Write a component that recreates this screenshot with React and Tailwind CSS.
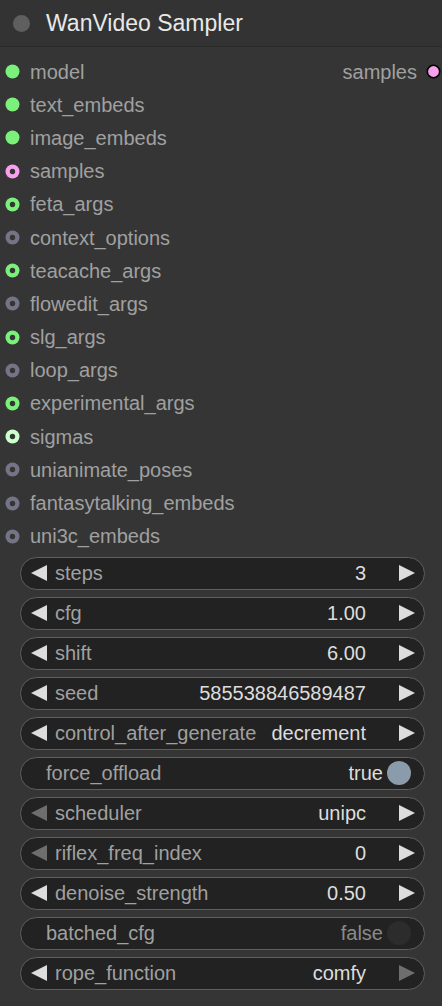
const inputs = [
  { name: "model", color: "#7bf07b", ring: false },
  { name: "text_embeds", color: "#7bf07b", ring: false },
  { name: "image_embeds", color: "#7bf07b", ring: false },
  { name: "samples", color: "#f6a0ee", ring: true },
  { name: "feta_args", color: "#7bf07b", ring: true },
  { name: "context_options", color: "#747486", ring: true },
  { name: "teacache_args", color: "#7bf07b", ring: true },
  { name: "flowedit_args", color: "#747486", ring: true },
  { name: "slg_args", color: "#7bf07b", ring: true },
  { name: "loop_args", color: "#747486", ring: true },
  { name: "experimental_args", color: "#7bf07b", ring: true },
  { name: "sigmas", color: "#ccffcc", ring: true },
  { name: "unianimate_poses", color: "#747486", ring: true },
  { name: "fantasytalking_embeds", color: "#747486", ring: true },
  { name: "uni3c_embeds", color: "#747486", ring: true },
];

const widgets = [
  { type: "num", label: "steps", value: "3" },
  { type: "num", label: "cfg", value: "1.00" },
  { type: "num", label: "shift", value: "6.00" },
  { type: "num", label: "seed", value: "585538846589487" },
  { type: "num", label: "control_after_generate", value: "decrement" },
  { type: "toggle", label: "force_offload", value: true },
  { type: "num", label: "scheduler", value: "unipc", leftOff: true },
  { type: "num", label: "riflex_freq_index", value: "0", leftOff: true },
  { type: "num", label: "denoise_strength", value: "0.50" },
  { type: "toggle", label: "batched_cfg", value: false },
  { type: "num", label: "rope_function", value: "comfy", rightOff: true },
];

const Dot = ({ color, ring, outline }) => (
  <svg width="15" height="15" viewBox="0 0 15 15" className="shrink-0">
    <circle cx="7.5" cy="7.5" r={outline ? 6.2 : 7} fill={color} stroke={outline ? "#000" : "none"} strokeWidth="1.6" />
    {ring && <circle cx="7.5" cy="7.5" r="2.7" fill="#353535" />}
  </svg>
);

const Arrow = ({ dir, dim }) => (
  <svg width="16" height="16" viewBox="0 0 16 16" className="shrink-0">
    {dir === "left" ? (
      <polygon points="16,0 16,16 0,8" fill={dim ? "#6e6e6e" : "#dddddd"} />
    ) : (
      <polygon points="0,0 0,16 16,8" fill={dim ? "#6e6e6e" : "#dddddd"} />
    )}
  </svg>
);

const Widget = ({ w }) => {
  if (w.type === "toggle") {
    return (
      <div className="h-[33px] flex items-center rounded-full border border-[#5f5f5f] bg-[#222222] pl-[25px] pr-[13px]">
        <span className="text-[#a0a0a0]">{w.label}</span>
        <span className={`ml-auto ${w.value ? "text-[#dddddd]" : "text-[#8a8a8a]"}`}>{w.value ? "true" : "false"}</span>
        <span className={`ml-[4px] w-[24px] h-[24px] rounded-full ${w.value ? "bg-[#8a9bab]" : "bg-[#2c2c2c]"}`} />
      </div>
    );
  }
  return (
    <div className="h-[33px] flex items-center rounded-full border border-[#5f5f5f] bg-[#222222] pl-[10px] pr-[9px]">
      <Arrow dir="left" dim={w.leftOff} />
      <span className="ml-[8px] text-[#a0a0a0]">{w.label}</span>
      <span className="ml-auto text-[#dddddd]">{w.value}</span>
      <span className="ml-[33px]">
        <Arrow dir="right" dim={w.rightOff} />
      </span>
    </div>
  );
};

export default function App() {
  return (
    <div className="w-[442px] h-[1006px] bg-[#353535] font-['Liberation_Sans',Arial,sans-serif] text-[20px] leading-none">
      <div className="h-[47px] flex items-center bg-[#333333] border-b border-[#2a2a2a]">
        <span className="ml-[13px] w-[17px] h-[17px] rounded-full bg-[#5f5f5f]" />
        <span className="ml-[16px] text-[23px] text-[#e8e8e8]">WanVideo Sampler</span>
      </div>
      <div className="pt-[8px]">
        {inputs.map((s, i) => (
          <div key={s.name} className="h-[33.2px] flex items-center pl-[5px]">
            <Dot color={s.color} ring={s.ring} />
            <span className="ml-[10px] text-[#a0a0a0]">{s.name}</span>
            {i === 0 && (
              <div className="ml-auto flex items-center pr-[1px]">
                <span className="text-[#a0a0a0]">samples</span>
                <span className="ml-[9px]">
                  <Dot color="#f6a0ee" outline />
                </span>
              </div>
            )}
          </div>
        ))}
      </div>
      <div className="mt-[4px] pl-[20px] pr-[17px] flex flex-col gap-[7px]">
        {widgets.map((w) => (
          <Widget key={w.label} w={w} />
        ))}
      </div>
    </div>
  );
}
